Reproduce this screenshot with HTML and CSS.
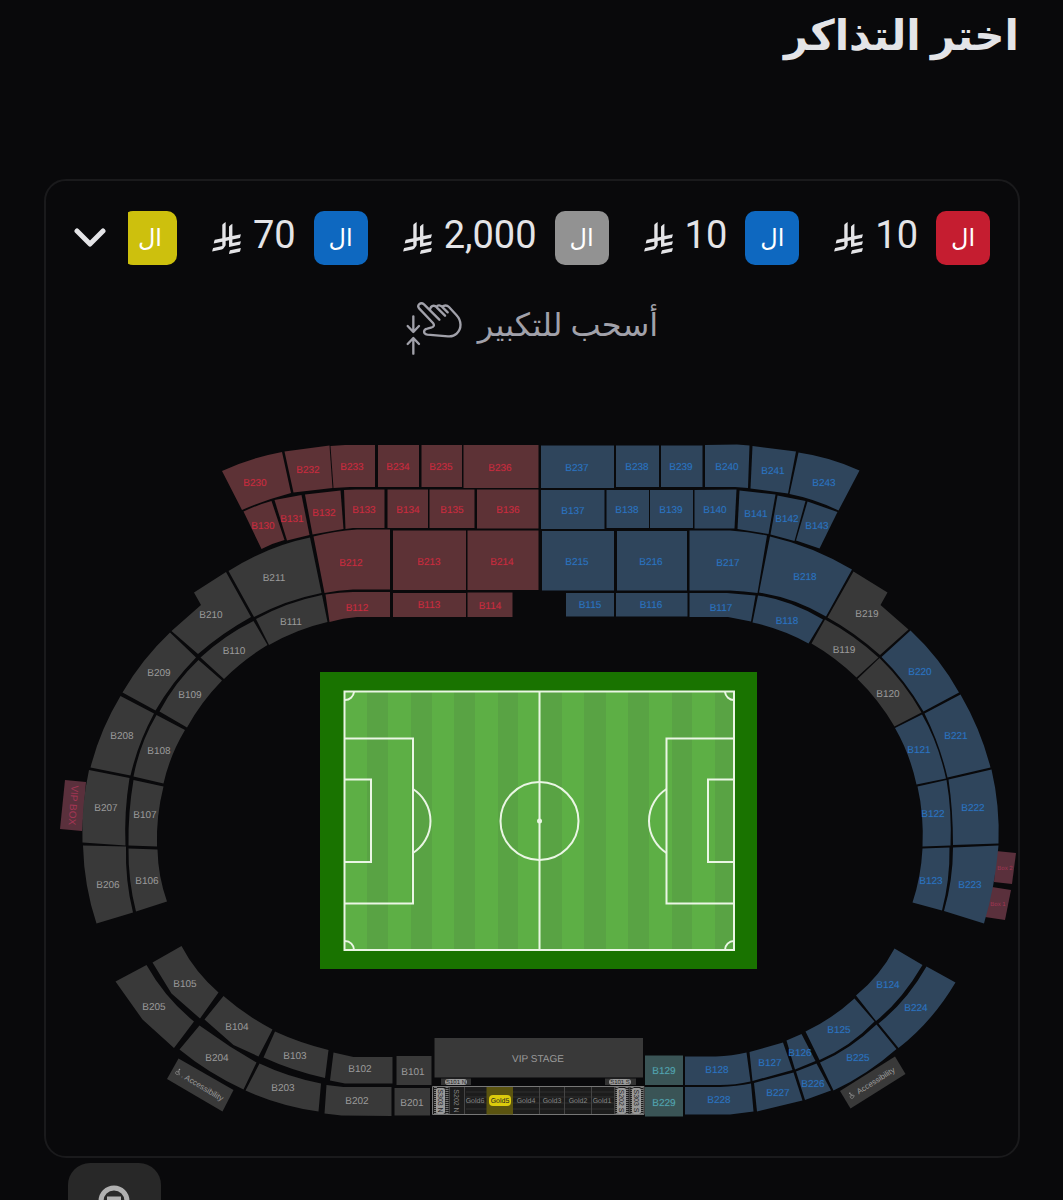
FILE: index.html
```html
<!DOCTYPE html>
<html lang="ar" dir="rtl">
<head>
<meta charset="utf-8">
<meta name="viewport" content="width=device-width, initial-scale=1">
<title>اختر التذاكر</title>
<link rel="stylesheet" href="styles.css">
</head>
<body>
<svg class="defs" aria-hidden="true">
  <symbol id="riyal" viewBox="0 0 1124 1256">
    <path d="M699.62 1113.02c-20.06 44.48-33.32 92.75-38.4 143.37l424.51-90.24c20.06-44.47 33.31-92.75 38.4-143.37l-424.51 90.24Z"/>
    <path d="M1085.73 895.8c20.06-44.47 33.32-92.75 38.4-143.37l-330.68 70.33v-135.2l292.27-62.11c20.06-44.47 33.32-92.75 38.4-143.37l-330.68 70.27V66.13c-50.67 28.45-95.67 66.32-132.25 110.99v403.35l-132.25 28.11V0c-50.67 28.44-95.67 66.32-132.25 110.99v525.69l-295.91 62.88c-20.06 44.47-33.33 92.75-38.42 143.37l334.33-71.05v170.26l-358.3 76.14c-20.06 44.47-33.32 92.75-38.4 143.37l375.04-79.7c30.53-6.35 56.77-24.4 73.83-49.24l68.78-101.97v-.02c7.14-10.55 11.3-23.27 11.3-36.97v-149.98l132.25-28.11v270.4l424.53-90.28Z"/>
  </symbol>
  <symbol id="wheelchair" viewBox="0 0 10 12">
    <circle cx="4" cy="1.500" r="1.300" fill="currentColor"/>
    <path d="M4 3v4h3l1.500 3M4 5h3M3 5.500a2.800 2.800 0 1 0 3.500 3.500" fill="none" stroke="currentColor"/>
  </symbol>
</svg>

<header class="header">
  <h1 class="title">اختر التذاكر</h1>
</header>

<main class="main">
  <section class="card">
    <div class="prices">
      <ul class="legend">
        <li class="legend-item"><span class="chip chip-red">ال</span><span class="price">10</span><svg class="riyal"><use href="#riyal"/></svg></li>
        <li class="legend-item"><span class="chip chip-blue">ال</span><span class="price">10</span><svg class="riyal"><use href="#riyal"/></svg></li>
        <li class="legend-item"><span class="chip chip-gray">ال</span><span class="price">2,000</span><svg class="riyal"><use href="#riyal"/></svg></li>
        <li class="legend-item"><span class="chip chip-blue">ال</span><span class="price">70</span><svg class="riyal"><use href="#riyal"/></svg></li>
        <li class="legend-item"><span class="chip chip-yellow">ال</span></li>
      </ul>
      <button class="expand" type="button" aria-label="عرض الكل">
        <svg viewBox="0 0 32 20"><path d="M3 3l13 13L29 3"/></svg>
      </button>
    </div>

    <div class="hint">
      <span class="hint-text">أسحب للتكبير</span>
      <svg class="pinch" viewBox="1106 392 168 162">
        <path d="M1160 402L1206 448M1178 418C1180 404 1192 404 1198 411L1223 436M1197 410c4-7 13-6 19 1l15 15M1215 410c5-6 14-6 20 0l22 24C1274 452 1273 476 1258 490C1250 498 1244 499 1232 498L1170 493C1157 490 1157 478 1170 475L1181 472C1190 470 1192 464 1187 458L1146 415C1137 404 1150 394 1160 402"/>
        <path d="M1128 438V484M1111 467L1128 485L1145 467M1128 550V504M1111 521L1128 503L1145 521"/>
      </svg>
    </div>

    <svg class="map" viewBox="46 355 972 801" role="img" aria-label="VIP STAGE">
      <g class="box">
        <path d="M65 780L86 782L82 831L60 829Z"/>
        <path d="M996 851L1016 853L1012 884L994 882Z"/>
        <path d="M992 887L1011 890L1005 920L985 917Z"/>
        <text transform="translate(70 805) rotate(94)">VIP BOX</text>
        <text class="tiny" x="1005" y="870">Box 2</text>
        <text class="tiny" x="998" y="906">Box 1</text>
      </g>

      <g class="red">
        <path d="M222 471Q250 458 282 452L291 493Q265 500 242 510Z"/>
        <path d="M284.500 451.500L329.500 445.500L332.500 488L293.500 492.500Z"/>
        <path d="M330.500 446L345 445H375V487H350L333.500 488Z"/>
        <path d="M378 445H419V487H378Z"/>
        <path d="M421.500 445H462V487H421.500Z"/>
        <path d="M463.500 445H538.500V488H463.500Z"/>
        <path d="M243.500 511.500Q257 505 271.500 501L284.500 540Q273 543 261.500 549Z"/>
        <path d="M274.500 500L301.500 495L309.500 535L287 540.500Z"/>
        <path d="M305 494.500L340.500 490.500L343.500 529L312.500 534.500Z"/>
        <path d="M344 490L356 489.500H384.500V528H353L345.500 529Z"/>
        <path d="M387.500 489.500H428V528H387.500Z"/>
        <path d="M429.500 489.500H474.500V528H429.500Z"/>
        <path d="M477 489.500H538.500V528.500H477Z"/>
        <path d="M313.500 536.500Q335 531 357 529.500H390V589.500H353Q338 590 324.500 593Z"/>
        <path d="M393 530.500H466V590H393Z"/>
        <path d="M467.500 530.500H538.500V590H467.500Z"/>
        <path d="M325.500 594.500Q340 592 353 592H390V617H357Q343 618 329.500 622Z"/>
        <path d="M393 593H466V617H393Z"/>
        <path d="M467.500 592.500H512.500V617H467.500Z"/>
        <text x="255" y="486">B230</text><text x="308" y="473">B232</text><text x="352" y="470">B233</text>
        <text x="398" y="470">B234</text><text x="441" y="470">B235</text><text x="500" y="471">B236</text>
        <text x="263" y="529">B130</text><text x="292" y="522">B131</text><text x="324" y="516">B132</text>
        <text x="364" y="513">B133</text><text x="408" y="513">B134</text><text x="452" y="513">B135</text>
        <text x="508" y="513">B136</text><text x="351" y="566">B212</text><text x="429" y="565">B213</text>
        <text x="502" y="565">B214</text><text x="357" y="611">B112</text><text x="429" y="608">B113</text>
        <text x="490" y="609">B114</text>
      </g>

      <g class="blue">
        <path d="M541 445.500H614V488H541Z"/>
        <path d="M616 445.500H659V487H616Z"/>
        <path d="M661 445.500H702.500V487H661Z"/>
        <path d="M705 445L737 444.500L749.500 445.500L748 488L735 487H705Z"/>
        <path d="M752.500 446L796 451.500L788 493.500L750.500 488.500Z"/>
        <path d="M798.500 452.500Q830 457 859.500 470.500L838.500 510.500Q815 499 789.500 494Z"/>
        <path d="M541 490H604.500V529H541Z"/>
        <path d="M606.500 490H649V528H606.500Z"/>
        <path d="M650 490H693V528H650Z"/>
        <path d="M694.500 490L736.500 489.500L734.500 528.500H694.500Z"/>
        <path d="M739.500 490.500L775.500 494.500L768.500 534L737.500 529Z"/>
        <path d="M777.500 495.500L805.500 501L794.500 541L770.500 534.500Z"/>
        <path d="M807.500 501.500L837.500 512L819.500 548.500L796 540.500Z"/>
        <path d="M542 531H614V590.500H542Z"/>
        <path d="M617 531H687V590.500H617Z"/>
        <path d="M689.500 530.500H730Q750 532 767 535.500L757.500 593Q744 591 730 590.500H689.500Z"/>
        <path d="M770 536.500Q812 546 852 569.500L826 616.500Q795 598 759 592.500Z"/>
        <path d="M566 593H614V616.500H566Z"/>
        <path d="M616 593H687.500V616.500H616Z"/>
        <path d="M689.500 593H727L755.500 595.500L751 621.500L728 617H689.500Z"/>
        <path d="M758 595.500Q790 600 823 619.500L808.500 643.500Q782 629 752.500 622.500Z"/>
        <path d="M910.500 630.500Q940 658 959 692.500L923.500 711.500Q905 680 881.500 657Z"/>
        <path d="M960.500 694.500Q981 730 990.500 767.500L947.500 777.500Q940 745 924.500 713.500Z"/>
        <path d="M922 714.500Q938 742 946 778.500L916.500 784.500Q910 754 895 728Z"/>
        <path d="M991.500 769.500Q1000 806 998.500 843.500L953 845Q953 810 948.500 779.500Z"/>
        <path d="M946.500 780Q952 812 950.500 845.500L922.500 846.500Q924 815 917.500 786.500Z"/>
        <path d="M998.500 845.500Q995 887 984 923.500L944 911Q953 880 953 847.500Z"/>
        <path d="M949.500 847.500Q950 880 942 910.500L912.500 902.500Q921 877 922.500 848.500Z"/>
        <path d="M894.500 948.500L922.500 965Q902 1000 876 1021L856 995.500Q880 976 894.500 948.500Z"/>
        <path d="M926.500 966.500L955.500 982.500Q932 1022 898.500 1048L878.500 1023.500Q907 1001 926.500 966.500Z"/>
        <path d="M854.500 998.500L874.500 1021.500Q850 1047 819.500 1060L805.500 1031.500Q832 1019 854.500 998.500Z"/>
        <path d="M876.500 1024.500L896.500 1049Q867 1075 833.500 1090.500L820 1062.500Q851 1049 876.500 1024.500Z"/>
        <path d="M786.500 1040.500L801.500 1034L815.500 1061L795 1069.500Z"/>
        <path d="M796 1071.500L816.500 1063.500L831 1090.500L805 1100Z"/>
        <path d="M749.500 1052L783 1042.500L792.500 1070L752.500 1081Z"/>
        <path d="M754 1083L793.500 1072.500L802.500 1100.500L757 1111.500Z"/>
        <path d="M685 1056.500H716Q732 1056 746.500 1052.500L750.500 1081.500Q735 1085 720 1085H685Z"/>
        <path d="M685 1087H720Q737 1086 751 1083.500L753.500 1111.500L730 1114.500H685Z"/>
        <text x="577" y="471">B237</text><text x="637" y="470">B238</text><text x="681" y="470">B239</text>
        <text x="727" y="470">B240</text><text x="773" y="474">B241</text><text x="824" y="486">B243</text>
        <text x="573" y="514">B137</text><text x="627" y="513">B138</text><text x="671" y="513">B139</text>
        <text x="715" y="513">B140</text><text x="756" y="517">B141</text><text x="787" y="522">B142</text>
        <text x="817" y="529">B143</text><text x="577" y="565">B215</text><text x="651" y="565">B216</text>
        <text x="728" y="566">B217</text><text x="805" y="580">B218</text><text x="590" y="608">B115</text>
        <text x="651" y="608">B116</text><text x="721" y="611">B117</text><text x="787" y="624">B118</text>
        <text x="920" y="675">B220</text><text x="956" y="739">B221</text><text x="919" y="753">B121</text>
        <text x="973" y="811">B222</text><text x="933" y="817">B122</text><text x="970" y="888">B223</text>
        <text x="931" y="884">B123</text><text x="888" y="988">B124</text><text x="916" y="1011">B224</text>
        <text x="839" y="1033">B125</text><text x="858" y="1061">B225</text><text x="800" y="1056">B126</text>
        <text x="813" y="1087">B226</text><text x="770" y="1066">B127</text><text x="778" y="1096">B227</text>
        <text x="717" y="1073">B128</text><text x="719" y="1103">B228</text>
      </g>

      <g class="teal">
        <path d="M645 1055.500H683V1085H645Z"/>
        <path d="M645 1087H683V1116.500H645Z"/>
        <text x="664" y="1074">B129</text><text x="664" y="1106">B229</text>
      </g>

      <g class="gray">
        <path d="M228.500 571Q268 546 310 537.500L321.500 593Q286 600 254 617Z"/>
        <path d="M256 619Q287 602 322 595L327.500 622Q297 629 269 645Z"/>
        <path d="M226 572L251 617Q222 633 198 654L171.500 631L201 605L194 592.500Z"/>
        <path d="M253.500 621L267.500 645Q243 660 224 679L200.500 657.500Q225 635 253.500 621Z"/>
        <path d="M170 632.500L196 657.500Q172 682 155.500 710.500L122.500 692.500Q142 659 170 632.500Z"/>
        <path d="M198.500 660L222 680.500Q201 702 187 727.500L159.500 711.500Q175 682 198.500 660Z"/>
        <path d="M120.500 696L154 713.500Q138 743 130.500 775.500L90.500 767.500Q100 730 120.500 696Z"/>
        <path d="M156.500 715L185 730Q170 755 163.500 783.500L133.500 776.500Q140 743 156.500 715Z"/>
        <path d="M89 770L129.500 778Q124 812 125.500 845.500L82.500 842.500Q81 806 89 770Z"/>
        <path d="M133.500 780L163.500 786.500Q156 816 157 846.500L128.500 845.500Q128 812 133.500 780Z"/>
        <path d="M83 845.500L126 846.500Q125 880 133 912.500L96.500 923.500Q84 886 83 845.500Z"/>
        <path d="M128.500 848.500L157.500 849.500Q158 876 167 901.500L136 911.500Q128 880 128.500 848.500Z"/>
        <path d="M152.500 962.500L181.500 946Q195 972 218.500 992.500L200 1018.500L171.500 993.500Z"/>
        <path d="M115.500 981.500L146.500 965Q165 998 194 1021.500L174 1048L142.500 1019.500Z"/>
        <path d="M223.500 996Q245 1015 272.500 1029.500L258.500 1056.500L233.500 1045L204.500 1019.500Z"/>
        <path d="M199.500 1025.500L230 1046.500L256.500 1062.500L243.500 1089.500Q208 1073 179.500 1049.500Z"/>
        <path d="M275 1031.500Q300 1043 328.500 1050L325 1078Q293 1071 263.500 1057.500Z"/>
        <path d="M259.500 1063.500Q288 1077 321 1083.500L318.500 1111.500Q280 1106 245.500 1090.500Z"/>
        <path d="M333.500 1052.500L353.500 1057H392.500V1083.500H345L330 1080.500Z"/>
        <path d="M326.500 1085L343.500 1087H391.500V1116L341.500 1115.500L324.500 1113.500Z"/>
        <path d="M396.500 1056H431.500V1085H396.500Z"/>
        <path d="M394.500 1088H430V1115.500H394.500Z"/>
        <path d="M853.500 571.500L887.500 592.500L880.500 605L908.500 629.500L880 655Q854 632 827.500 617.500Z"/>
        <path d="M825 619.500Q854 635 878.500 657.500L856.500 677.500Q835 657 811.500 643.500Z"/>
        <path d="M879.500 658Q905 683 921.500 712.500L894.500 726.500Q879 700 857.500 679Z"/>
        <path d="M178.500 1058.500L233.500 1090L222.500 1111.500L167 1079Z"/>
        <path d="M840 1091L895 1056.500L905.500 1074L850.500 1108.500Z"/>
        <path d="M434.500 1038H643V1077.500H434.500Z"/>
        <text x="274" y="581">B211</text><text x="291" y="625">B111</text><text x="211" y="618">B210</text>
        <text x="234" y="654">B110</text><text x="159" y="676">B209</text><text x="190" y="698">B109</text>
        <text x="122" y="739">B208</text><text x="159" y="754">B108</text><text x="106" y="811">B207</text>
        <text x="145" y="818">B107</text><text x="108" y="888">B206</text><text x="147" y="884">B106</text>
        <text x="185" y="987">B105</text><text x="154" y="1010">B205</text><text x="237" y="1030">B104</text>
        <text x="217" y="1061">B204</text><text x="295" y="1059">B103</text><text x="283" y="1091">B203</text>
        <text x="360" y="1072">B102</text><text x="357" y="1104">B202</text><text x="413" y="1075">B101</text>
        <text x="412" y="1106">B201</text><text x="867" y="617">B219</text><text x="844" y="653">B119</text>
        <text x="888" y="697">B120</text><text x="538" y="1062">VIP STAGE</text>
        <g transform="translate(200 1085) rotate(31)">
          <use href="#wheelchair" x="-28" y="-4" width="6" height="8"/>
          <text class="small" x="3" y="3">. Accessibility</text>
        </g>
        <g transform="translate(873 1082) rotate(-32)">
          <use href="#wheelchair" x="-28" y="-4" width="6" height="8"/>
          <text class="small" x="3" y="3">Accessibility</text>
        </g>
      </g>

      <g class="suites">
        <path class="strip" d="M441 1078.500H471V1085H441ZM605 1078.500H636V1085H605Z"/>
        <path class="frame" d="M432.500 1086.500H644V1114.500H432.500Z"/>
        <path class="rows" d="M466 1092H614M466 1097H614M466 1103H614M466 1109H614"/>
        <path class="seats" d="M435.500 1087V1115M447 1087V1115M617 1087V1115M627 1087V1115M632 1087V1115M642 1087V1115"/>
        <path class="split" d="M449.500 1087V1114M464.500 1087V1114M539.500 1087V1114M564.500 1087V1114M591.500 1087V1114M614.500 1087V1114M629.500 1087V1114"/>
        <path class="gold" d="M486.500 1087H513V1114.500H486.500Z"/>
        <rect class="pill" x="445" y="1079" width="22" height="6" rx="3"/>
        <rect class="pill" x="609" y="1079" width="22" height="6" rx="3"/>
        <rect class="pill" x="436" y="1088" width="9" height="26" rx="2"/>
        <rect class="pill" x="617" y="1088" width="9" height="26" rx="2"/>
        <rect class="pill" x="632" y="1088" width="9" height="26" rx="2"/>
        <rect class="pill-gold" x="489" y="1095" width="22" height="11" rx="4"/>
        <text class="dark tiny" x="456" y="1084">S101 N</text>
        <text class="dark tiny" x="620" y="1084">S101 S</text>
        <text class="dark" transform="translate(438 1101) rotate(90)">S303 N</text>
        <text transform="translate(454 1101) rotate(90)">S202 N</text>
        <text class="dark" transform="translate(619 1101) rotate(90)">S202 S</text>
        <text class="dark" transform="translate(634 1101) rotate(90)">S303 S</text>
        <text x="475" y="1103">Gold6</text><text class="dark" x="500" y="1103">Gold5</text>
        <text x="526" y="1103">Gold4</text><text x="552" y="1103">Gold3</text>
        <text x="578" y="1103">Gold2</text><text x="602" y="1103">Gold1</text>
      </g>

      <g>
        <path class="turf-edge" d="M320 672H757V969H320Z"/>
        <path class="turf" d="M345 692H734V950H345Z"/>
        <path class="turf-dark" d="M367 692h21v258h-21ZM411 692h21v258h-21ZM454 692h21v258h-21ZM498 692h20v258h-20ZM541 692h21v258h-21ZM584 692h22v258h-22ZM628 692h21v258h-21ZM672 692h20v258h-20ZM715 692h19v258h-19Z"/>
        <g class="lines">
          <path d="M344.500 691.500H734V950H344.500ZM539.500 692V950"/>
          <path d="M345 738.500H413V903.500H345M345 779.500H371V862H345M734 738.500H666.500V903.500H734M734 779.500H708V862H734"/>
          <path d="M413 789A38 38 0 0 1 413 853M666.500 789A38 38 0 0 0 666.500 853"/>
          <path d="M354 692A9 9 0 0 1 345 700M725 692A9 9 0 0 0 734 700M354 950A9 9 0 0 0 345 941M725 950A9 9 0 0 1 734 941"/>
          <circle cx="539.500" cy="821" r="39"/>
        </g>
        <circle class="spot" cx="539.500" cy="821" r="2.500"/>
      </g>
    </svg>
  </section>

  <div class="tools">
    <button class="zoom" type="button" aria-label="تصغير">
      <svg viewBox="0 0 44 44"><circle cx="21" cy="17" r="13"/><path d="M14 15h14M31 27l11 13"/></svg>
    </button>
  </div>
</main>
</body>
</html>
```
FILE: styles.css
```css
* {
  box-sizing: border-box;
}

body {
  margin: 0;
  background: #09090b;
  color: #e4e4e7;
  font-family: Roboto, "DejaVu Sans", sans-serif;
  overflow-x: hidden;
}

.defs {
  position: absolute;
  width: 0;
  height: 0;
}

.header {
  height: 179px;
  padding: 4px 44px 0;
}

.title {
  margin: 0;
  font-size: 42px;
  line-height: 64px;
  font-weight: 700;
}

.main {
  padding: 0 43px 0 44px;
}

.card {
  border: 2px solid #1a1a1c;
  border-radius: 22px;
}

.prices {
  display: flex;
  align-items: center;
  gap: 22px;
  padding: 30px 28px 0;
}

.legend {
  display: flex;
  flex: 1;
  min-width: 0;
  gap: 35px;
  margin: 0;
  padding: 0;
  overflow: hidden;
  list-style: none;
}

.legend-item {
  display: flex;
  flex-shrink: 0;
  align-items: center;
}

.chip {
  width: 54px;
  height: 54px;
  border-radius: 10px;
  color: #fff;
  font-size: 24px;
  line-height: 54px;
  text-align: center;
}

.chip-red { background: #c51d30; }
.chip-blue { background: #0e68c0; }
.chip-gray { background: #929292; }
.chip-yellow { background: #cdc00d; }

.price {
  margin: 0 18px 0 12px;
  font-size: 38px;
  line-height: 48px;
  padding-bottom: 6px;
}

.riyal {
  width: 29px;
  height: 32px;
  fill: currentColor;
}

.expand {
  width: 32px;
  padding: 0;
  border: 0;
  background: none;
  color: inherit;
}

.expand svg {
  display: block;
  width: 32px;
  height: 20px;
  fill: none;
  stroke: currentColor;
  stroke-width: 5;
  stroke-linecap: round;
  stroke-linejoin: round;
}

.hint {
  display: flex;
  align-items: center;
  justify-content: center;
  gap: 16px;
  height: 54px;
  margin-top: 36px;
  color: #a1a1aa;
  font-size: 32px;
}

.hint-text {
  padding-bottom: 6px;
  line-height: 48px;
}

.pinch {
  width: 56px;
  height: 54px;
  fill: none;
  stroke: currentColor;
  stroke-width: 7;
  stroke-linecap: round;
  stroke-linejoin: round;
}

.map {
  display: block;
  width: 100%;
  height: auto;
  direction: ltr;
  font-family: "Liberation Sans", Arial, sans-serif;
  font-size: 10px;
  text-anchor: middle;
  text-rendering: geometricPrecision;
}

.map .small { font-size: 8px; }
.map .tiny { font-size: 6px; }

.gray path { fill: #393939; }
.gray text { fill: #9b9b9b; }
.gray use { color: #9b9b9b; }

.red path { fill: #5d3236; }
.red text { fill: #cb2c3f; stroke: #cb2c3f; stroke-opacity: 0.15; }

.blue path { fill: #2f455c; }
.blue text { fill: #2b74c2; stroke: #2b74c2; stroke-opacity: 0.15; }

.teal path { fill: #3a5456; }
.teal text { fill: #52a6b2; stroke: #52a6b2; stroke-opacity: 0.15; }

.box path { fill: #5a303c; }
.box text { fill: #a23654; }

.suites { font-size: 7px; }
.suites text { fill: #888; }
.suites .dark { fill: #222; }
.strip { fill: #333; }
.frame { fill: #1c1c1c; stroke: #777; }
.rows { stroke: #2e2e2e; }
.split { stroke: #444; }
.seats { stroke: #777; stroke-width: 3; stroke-dasharray: 1 1; }
.gold { fill: #5b5410; }
.pill { fill: #999; }
.pill-gold { fill: #dccb0c; }

.turf-edge { fill: #197300; }
.turf { fill: #5daf45; }
.turf-dark { fill: #59a344; }
.lines { fill: none; stroke: #eaf6e4; stroke-width: 2; }
.spot { fill: #eaf6e4; }

.tools {
  display: flex;
  justify-content: flex-end;
  padding: 5px 24px;
}

.zoom {
  display: flex;
  justify-content: center;
  width: 93px;
  height: 93px;
  padding: 21px 0 0;
  border: 0;
  border-radius: 22px;
  background: #282828;
  color: #b0b0b0;
}

.zoom svg {
  width: 44px;
  height: 44px;
  fill: none;
  stroke: currentColor;
  stroke-width: 5;
}
```
